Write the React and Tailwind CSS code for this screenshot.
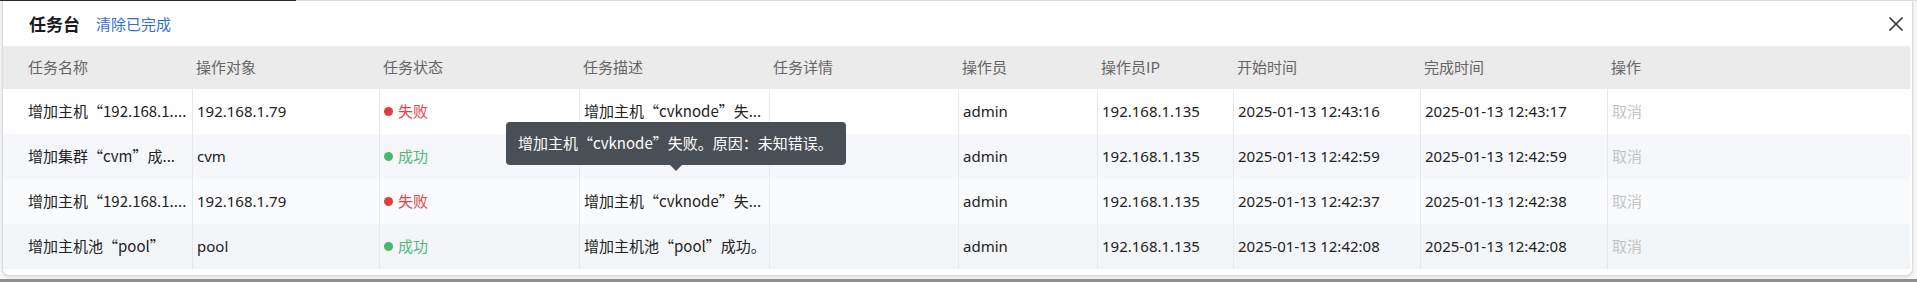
import React from "react";

const cols = "grid grid-cols-[189px_187px_200px_190px_189px_139px_136px_187px_187px_303px]";
const headers = ["任务名称", "操作对象", "任务状态", "任务描述", "任务详情", "操作员", "操作员IP", "开始时间", "完成时间", "操作"];

const rows = [
  { name: "增加主机“192.168.1....", obj: "192.168.1.79", ok: false, desc: "增加主机“cvknode”失...", start: "2025-01-13 12:43:16", end: "2025-01-13 12:43:17", bg: "bg-white" },
  { name: "增加集群“cvm”成...", obj: "cvm", ok: true, desc: "增加集群“cvm”成功。", start: "2025-01-13 12:42:59", end: "2025-01-13 12:42:59", bg: "bg-[#f5f7fa]" },
  { name: "增加主机“192.168.1....", obj: "192.168.1.79", ok: false, desc: "增加主机“cvknode”失...", start: "2025-01-13 12:42:37", end: "2025-01-13 12:42:38", bg: "bg-[#fafbfc]" },
  { name: "增加主机池“pool”", obj: "pool", ok: true, desc: "增加主机池“pool”成功。", start: "2025-01-13 12:42:08", end: "2025-01-13 12:42:08", bg: "bg-[#f3f6f9]" },
];

const latin = { fontFamily: '"Noto Sans", "Noto Sans CJK SC", sans-serif' };

function Cell({ children, first, className = "" }) {
  return (
    <div className={`flex items-center min-w-0 whitespace-nowrap ${first ? "pl-[25px]" : "border-l border-[#e6e8eb] pl-1"} ${className}`}>
      {children}
    </div>
  );
}

export default function App() {
  return (
    <div className="w-[1917px] h-[282px] bg-[#f7f7f7] flex flex-col overflow-hidden text-[15px] text-[#222]" style={{ fontFamily: '"Noto Sans CJK SC", "Noto Sans", sans-serif' }}>
      <div className="flex h-[1px] shrink-0">
        <div className="w-[296px] bg-[#2a2a2a]" />
        <div className="flex-1 bg-[#e2e2e2]" />
      </div>
      <div className="ml-[2px] w-[1911px] h-[275px] bg-white border border-t-0 border-[#dcdcdc] rounded-b-[7px] shadow-[0_1px_3px_rgba(0,0,0,0.12)] flex flex-col relative">
        <div className="h-[45px] flex items-center pl-[26px] pr-[8px] shrink-0">
          <span className="text-[17px] font-bold text-[#1a1a1a] leading-none">任务台</span>
          <span className="ml-[16px] text-[15px] text-[#2f6fd8] leading-none">清除已完成</span>
          <div className="flex-1" />
          <svg width="16" height="16" viewBox="0 0 16 16">
            <path d="M1.5 1.5 L14.5 14.5 M14.5 1.5 L1.5 14.5" stroke="#2b2b2b" strokeWidth="1.5" fill="none" />
          </svg>
        </div>
        <div className="w-[1907px]">
          <div className={`${cols} h-[43px] bg-[#ebebeb] text-[#666]`}>
            {headers.map((h, i) => (
              <div key={h} className={`flex items-center ${i === 0 ? "pl-[25px]" : "pl-1"}`}>{h}</div>
            ))}
          </div>
          {rows.map((r, i) => (
            <div key={i} className={`${cols} h-[45px] ${r.bg}`}>
              <Cell first><span>{r.name}</span></Cell>
              <Cell><span style={latin}>{r.obj}</span></Cell>
              <Cell>
                <span className={`w-[9px] h-[9px] rounded-full mr-[5px] ${r.ok ? "bg-[#46b96c]" : "bg-[#e53b3b]"}`} />
                <span className={r.ok ? "text-[#52b87a]" : "text-[#e0454a]"}>{r.ok ? "成功" : "失败"}</span>
              </Cell>
              <Cell><span>{r.desc}</span></Cell>
              <Cell />
              <Cell><span style={latin}>admin</span></Cell>
              <Cell><span style={latin}>192.168.1.135</span></Cell>
              <Cell><span style={latin}>{r.start}</span></Cell>
              <Cell><span style={latin}>{r.end}</span></Cell>
              <Cell><span className="text-[#c4c4c4]">取消</span></Cell>
            </div>
          ))}
        </div>
        <div className="absolute left-[503px] top-[121px] w-[340px] h-[43px] bg-[#4a4e55] rounded-[4px] flex items-center pl-[12px] text-white text-[15px] whitespace-nowrap">
          增加主机“cvknode”失败。原因：未知错误。
          <div className="absolute left-[164px] top-[43px] w-0 h-0 border-l-[6px] border-r-[6px] border-t-[6px] border-l-transparent border-r-transparent border-t-[#4a4e55]" />
        </div>
      </div>
      <div className="flex-1" />
      <div className="h-[3px] bg-[#8e8e8e] shrink-0" />
    </div>
  );
}
